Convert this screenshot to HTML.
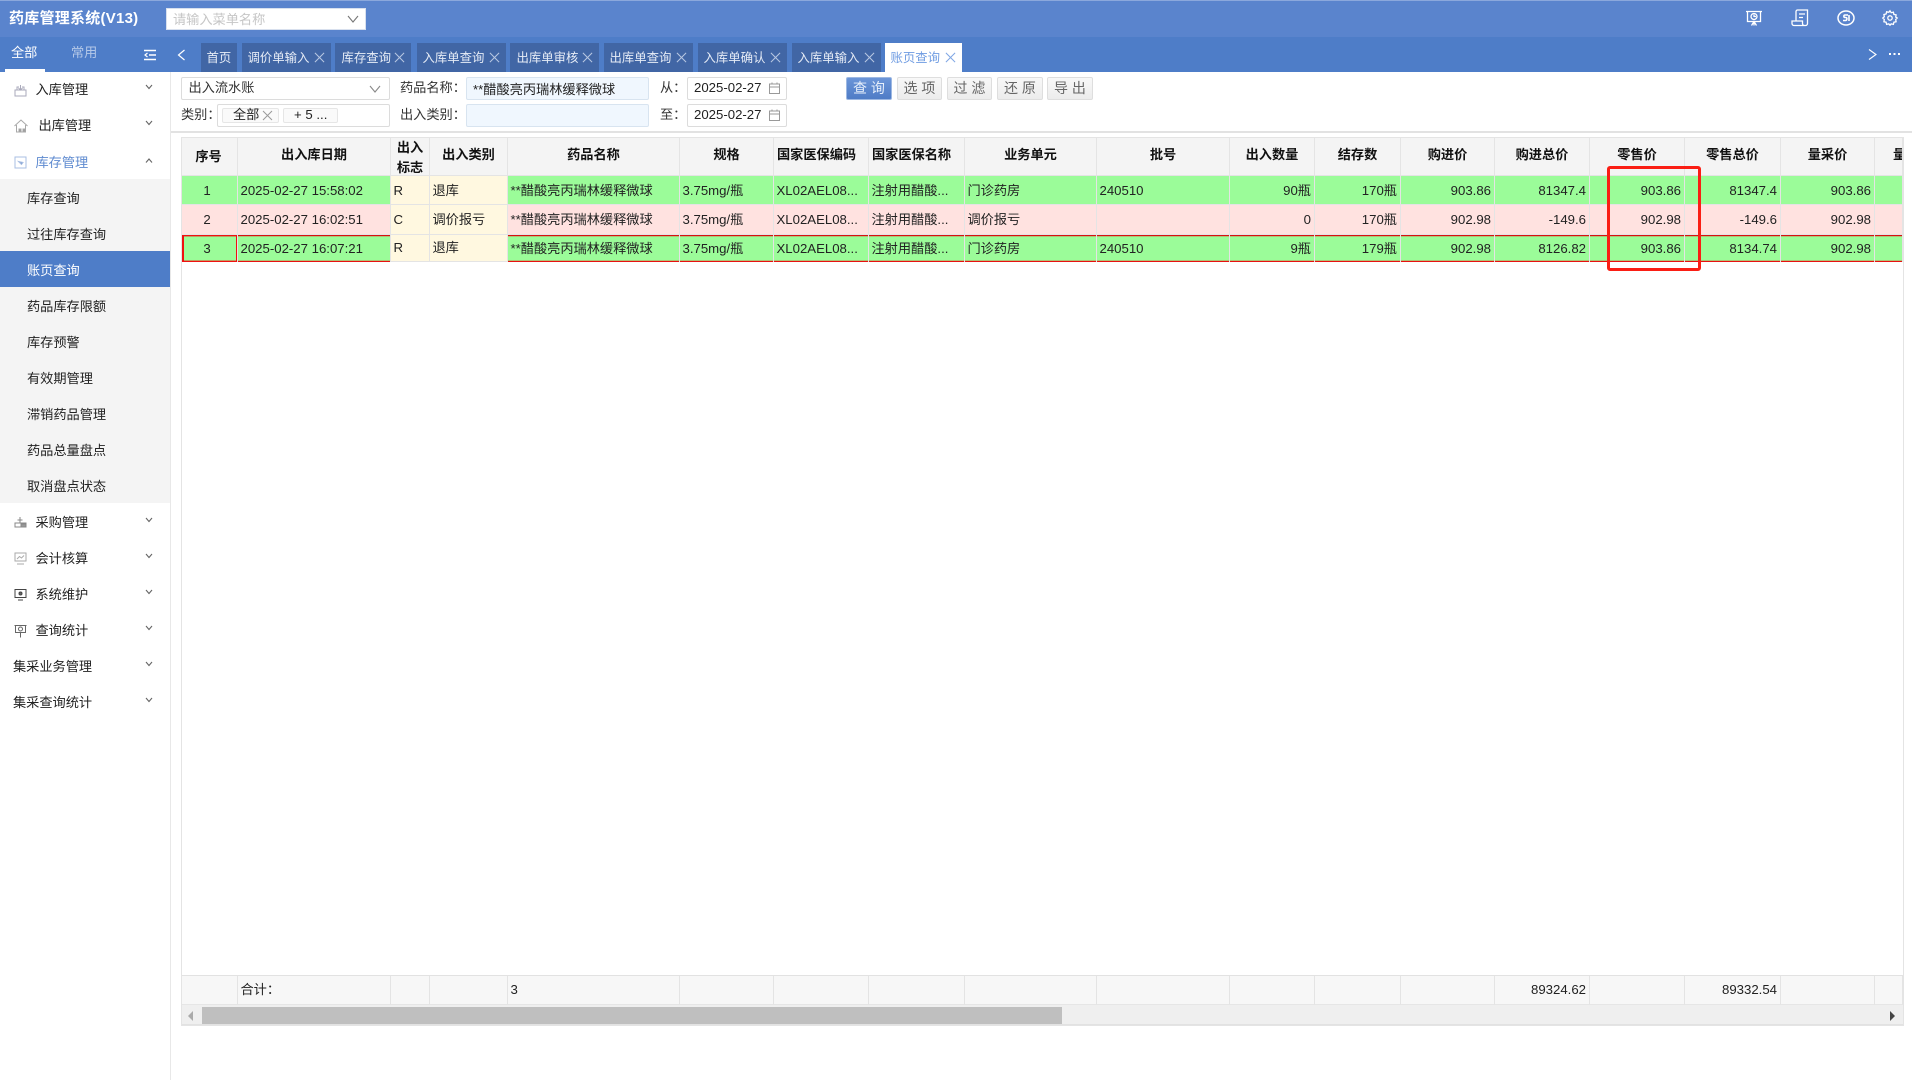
<!DOCTYPE html>
<html lang="zh-CN">
<head>
<meta charset="utf-8">
<title>药库管理系统</title>
<style>
*{box-sizing:border-box}
html,body{margin:0;padding:0;width:1912px;height:1080px;overflow:hidden;background:#fff}
body{font-family:"Liberation Sans","Noto Sans CJK SC",sans-serif;font-size:13.2px;color:#222;position:relative}
.a{position:absolute}
.t{position:absolute;line-height:20px;height:20px;white-space:nowrap}
svg{position:absolute;overflow:visible;fill:none}
.tab{position:absolute;top:43px;height:29px;background:#4166a5;color:#e6ecf6;font-size:12.4px;line-height:30px;padding-left:5.500px;white-space:nowrap}
.tab i{position:absolute;top:9px;right:7px;width:10px;height:10px}
.tab i:before,.tab i:after{content:"";position:absolute;left:4.500px;top:-1px;width:1px;height:13px;background:#b9c8e2}
.tab i:before{transform:rotate(45deg)}.tab i:after{transform:rotate(-45deg)}
.tab.on{background:#fff;color:#6f9ce2}
.tab.on i:before,.tab.on i:after{background:#7fa6e4}
.box{position:absolute;border:1px solid #dcdcdc;border-radius:2px;background:#fff}
.btn{position:absolute;top:77px;height:23px;border:1px solid #dedede;border-radius:2px;background:linear-gradient(#f8f8f8,#ececec);color:#666;text-align:center;line-height:21px;font-size:14px;white-space:nowrap}
.sub{position:absolute;left:27px;line-height:20px;white-space:nowrap}
table{border-collapse:separate;border-spacing:0;table-layout:fixed;position:absolute;left:182px;width:1721px;font-size:13.2px}
td,th{border-right:1px solid #e4e4e4;border-bottom:1px solid #e4e4e4;padding:0 3px 0 2.500px;white-space:nowrap;overflow:hidden;font-weight:normal;color:#222;line-height:20px}
th{background:#f4f4f4;height:38px;font-weight:bold;color:#111;padding:0 0 3px;text-align:center;font-size:13.2px}
th.l{text-align:left;padding-left:3px}
th .two{height:37px;line-height:20px;margin-top:-1px}
.g td{background:#9bfc99}.p td{background:#ffe2e0}
td.y{background:#fff8e0!important}
.r{text-align:right}.c{text-align:center;padding:0 5px 0 0}
.r1 td{height:29px;padding-top:1px}.r2 td{height:30px}
.r3 td{height:27px;box-shadow:inset 0 1px 0 #d81010,inset 0 2px 0 rgba(230,20,20,.25),inset 0 -1px 0 #e81010,inset 0 -2px 0 rgba(230,20,20,.25);border-bottom:0}
.r3 td.y{box-shadow:none;border-bottom:1px solid #e4e4e4}
.r3 td.first{box-shadow:inset 0 1px 0 #f01010,inset 0 -1px 0 #f01010,inset 2px 0 0 #f01010,inset -1px 0 0 #f01010,inset 0 2px 0 rgba(240,16,16,.4),inset 0 -2px 0 rgba(240,16,16,.4)}
.f td{background:#f7f7f7;height:29px;border-top:0;border-bottom:1px solid #e6e6e6;color:#222;line-height:18px}
</style>
</head>
<body>
<!-- top bars -->
<div class="a" style="left:0;top:0;width:1912px;height:37px;background:#5a84cd"></div>
<div class="a" style="left:0;top:0;width:1912px;height:1px;background:#8ba8dc"></div>
<div class="a" style="left:0;top:37px;width:1912px;height:35px;background:#4e7dc8"></div>
<div class="t" style="left:9px;top:9px;color:#fff;font-weight:bold;font-size:15px;letter-spacing:.25px">药库管理系统(V13)</div>
<div class="a" style="left:166px;top:8px;width:200px;height:22px;background:#fff;border:1px solid #d8e0ee"></div>
<div class="t" style="left:173px;top:10px;color:#c6c6c6">请输入菜单名称</div>
<svg style="left:347px;top:15px" width="12" height="8"><path d="M1 1l5 6 5-6" stroke="#777" stroke-width="1.100"/></svg>
<!-- top right icons -->
<svg style="left:1745px;top:9px" width="18" height="18" stroke="#fff" stroke-width="1.300"><path d="M1 2.500h16M2.500 2.500v10h13v-10M9 12.500v4M6.500 16.500l2.500-4 2.500 4"/><circle cx="9" cy="7.500" r="3"/><path d="M9 5.500v2h2"/></svg>
<svg style="left:1791px;top:9px" width="18" height="18" stroke="#fff" stroke-width="1.300"><path d="M5 12V2.500a1.500 1.500 0 0 1 1.500-1.500H16.500v13.500a2 2 0 0 1-2 2H3a2 2 0 0 1-2-2V12h10.500v2.500a2 2 0 0 0 2 2M8 5h6M8 8.500h4"/></svg>
<svg style="left:1837px;top:9px" width="18" height="18" stroke="#fff" stroke-width="1.500"><ellipse cx="9" cy="9" rx="8" ry="7"/><path d="M11 6H8c-1.500 0-1.500 2.500 0 2.500h1c1.500 0 1 3-.5 3H6M12 6v6" stroke-width="1.600"/></svg>
<svg style="left:1882px;top:10px" width="16" height="16" stroke="#fff" stroke-width="1.300"><path d="M8 .8l1.200 1.900 2.200-.5.500 2.200 2.200.5-.4 2.200L15.200 8l-1.500 1.500.4 2.200-2.200.5-.5 2.200-2.200-.5L8 15.200l-1.200-1.300-2.200.5-.5-2.200-2.200-.5.400-2.200L.8 8l1.500-1.300-.4-2.200 2.200-.5.500-2.200 2.200.5z"/><circle cx="8" cy="8" r="2.200"/></svg>
<svg style="left:1868px;top:49px" width="9" height="11"><path d="M1 .5l7 5-7 5" stroke="#fff" stroke-width="1.100"/></svg>
<div class="a" style="left:1889px;top:53px;width:2px;height:2px;background:#fff;box-shadow:4.500px 0 0 #fff,9px 0 0 #fff"></div>
<!-- side tabs -->
<div class="t" style="left:11px;top:43px;color:#fff">全部</div>
<div class="t" style="left:71px;top:43px;color:#b4c8e8">常用</div>
<div class="a" style="left:5px;top:69px;width:40px;height:3px;background:#fff"></div>
<svg style="left:144px;top:49px" width="12" height="12" stroke="#fff" stroke-width="1.600"><path d="M0 1.500h12M5 6h7M0 10.500h12"/><path d="M3.500 4L1 6l2.500 2" stroke-width="1.200"/></svg>
<svg style="left:177px;top:49px" width="9" height="12"><path d="M7.500 1L1.500 6l6 5" stroke="#fff" stroke-width="1.200"/></svg>
<!-- tabs -->
<div class="tab" style="left:201px;width:36px">首页</div>
<div class="tab" style="left:242px;width:89px">调价单输入<i></i></div>
<div class="tab" style="left:335px;width:76px;padding-left:6.500px">库存查询<i></i></div>
<div class="tab" style="left:417px;width:89px">入库单查询<i></i></div>
<div class="tab" style="left:510px;width:89px;padding-left:6.500px">出库单审核<i></i></div>
<div class="tab" style="left:604px;width:89px">出库单查询<i></i></div>
<div class="tab" style="left:698px;width:89px">入库单确认<i></i></div>
<div class="tab" style="left:792px;width:89px">入库单输入<i></i></div>
<div class="tab on" style="left:885px;width:77px">账页查询<i></i></div>
<!-- sidebar -->
<div class="a" style="left:170px;top:72px;width:1px;height:1008px;background:#e8e8e8"></div>
<div class="a" style="left:0;top:179px;width:170px;height:324px;background:#f4f4f4"></div>
<div class="a" style="left:0;top:251px;width:170px;height:36px;background:#4e7dc8"></div>
<!-- first level icons -->
<svg style="left:14px;top:84px" width="13" height="13" stroke="#aab" stroke-width="1"><path d="M1 6h11v6H1zM3 6V3h2M10 6V3H8M6.500 1v5M4.500 4l2 2 2-2"/></svg>
<svg style="left:14px;top:119px" width="14" height="14" stroke="#a8a8a8" stroke-width="1"><path d="M.5 7L7 1l6.500 6M2.500 6v7h9V6"/><path d="M5 10h2v3H5zM9 10h2v3H9z" fill="#999"/></svg>
<svg style="left:14px;top:156px" width="13" height="13" stroke="#a9bfe3" stroke-width="1"><path d="M1 1h11v11H1z"/><path d="M4.500 5.500l3 3 1.500-2z" fill="#6f8fc6"/></svg>
<svg style="left:14px;top:516px" width="13" height="13" stroke="#888" stroke-width="1"><path d="M1 7h11v4H1zM6 1v6M3.500 4h5"/><path d="M7 8h5v3H7z" fill="#999"/></svg>
<svg style="left:14px;top:552px" width="13" height="13" stroke="#aaa" stroke-width="1"><path d="M1 1h11v8H1zM3 12h7M3 7l2.500-2.500 2 1.500L10 3.500"/></svg>
<svg style="left:14px;top:588px" width="13" height="13" stroke="#444" stroke-width="1"><path d="M1 1.500h11v8H1zM4 12h5"/><circle cx="6.500" cy="5.500" r="1.500" fill="#666"/></svg>
<svg style="left:14px;top:624px" width="13" height="14" stroke="#666" stroke-width="1"><path d="M.5 1.500h12M1.500 1.500v7h10v-7M6.500 8.500v5"/><circle cx="6.500" cy="5" r="2"/></svg>
<div class="t" style="left:35.500px;top:80px">入库管理</div>
<div class="t" style="left:38.500px;top:116px">出库管理</div>
<div class="t" style="left:35.500px;top:153px;color:#5f8bd0">库存管理</div>
<div class="sub" style="top:189px">库存查询</div>
<div class="sub" style="top:225px">过往库存查询</div>
<div class="sub" style="top:261px;color:#fff">账页查询</div>
<div class="sub" style="top:297px">药品库存限额</div>
<div class="sub" style="top:333px">库存预警</div>
<div class="sub" style="top:369px">有效期管理</div>
<div class="sub" style="top:405px">滞销药品管理</div>
<div class="sub" style="top:441px">药品总量盘点</div>
<div class="sub" style="top:477px">取消盘点状态</div>
<div class="t" style="left:35.500px;top:513px">采购管理</div>
<div class="t" style="left:35.500px;top:549px">会计核算</div>
<div class="t" style="left:35.500px;top:585px">系统维护</div>
<div class="t" style="left:35.500px;top:621px">查询统计</div>
<div class="t" style="left:13px;top:657px">集采业务管理</div>
<div class="t" style="left:13px;top:693px">集采查询统计</div>
<svg style="left:0;top:0" width="170" height="720" stroke="#666" stroke-width="1.100"><path d="M146 85l3 3.500 3-3.500M146 121l3 3.500 3-3.500M146 162.500l3-3.500 3 3.500M146 518l3 3.500 3-3.500M146 554l3 3.500 3-3.500M146 590l3 3.500 3-3.500M146 626l3 3.500 3-3.500M146 662l3 3.500 3-3.500M146 698l3 3.500 3-3.500"/></svg>
<!-- filter -->
<div class="box" style="left:181px;top:77px;width:209px;height:23px"></div>
<div class="t" style="left:188.500px;top:78px;color:#333">出入流水账</div>
<svg style="left:369px;top:85px" width="12" height="8"><path d="M1 1l5 6 5-6" stroke="#888" stroke-width="1.100"/></svg>
<div class="t" style="left:400px;top:78px;color:#333">药品名称：</div>
<div class="box" style="left:466px;top:77px;width:183px;height:23px;background:#f0f7fe;border-color:#d8e4f0"></div>
<div class="t" style="left:473px;top:80px;color:#222">**醋酸亮丙瑞林缓释微球</div>
<div class="t" style="left:181px;top:105px;color:#333">类别：</div>
<div class="box" style="left:217px;top:104px;width:173px;height:23px"></div>
<div class="box" style="left:222px;top:108px;width:57px;height:15px;background:#fafafa;border-color:#e6e6e6"></div>
<div class="t" style="left:233px;top:105px;color:#222">全部</div>
<svg style="left:263px;top:111px" width="9" height="9" stroke="#999"><path d="M0 0l9 9M9 0L0 9"/></svg>
<div class="box" style="left:283px;top:108px;width:55px;height:15px;background:#fafafa;border-color:#e6e6e6"></div>
<div class="t" style="left:294px;top:105px;color:#222">+ 5 ...</div>
<div class="t" style="left:400px;top:105px;color:#333">出入类别：</div>
<div class="box" style="left:466px;top:104px;width:183px;height:23px;background:#f0f7fe;border-color:#d8e4f0"></div>
<div class="t" style="left:660px;top:78px;color:#333">从：</div>
<div class="t" style="left:660px;top:105px;color:#333">至：</div>
<div class="box" style="left:687px;top:77px;width:100px;height:23px"></div>
<div class="box" style="left:687px;top:104px;width:100px;height:23px"></div>
<div class="t" style="left:694px;top:78px">2025-02-27</div>
<div class="t" style="left:694px;top:105px">2025-02-27</div>
<svg style="left:769px;top:82px" width="11" height="12" stroke="#999"><path d="M.5 2h10v9.500H.5zM.5 5h10M3 .5v2M8 .5v2"/></svg>
<svg style="left:769px;top:109px" width="11" height="12" stroke="#999"><path d="M.5 2h10v9.500H.5zM.5 5h10M3 .5v2M8 .5v2"/></svg>
<div class="btn" style="left:846px;width:46px;background:linear-gradient(#6b95d8,#4f7cc6);border-color:#9db8e2;color:#e8f0fb">查 询</div>
<div class="btn" style="left:897px;width:45px">选 项</div>
<div class="btn" style="left:947px;width:45px">过 滤</div>
<div class="btn" style="left:997px;width:46px">还 原</div>
<div class="btn" style="left:1047px;width:46px">导 出</div>
<div class="a" style="left:171px;top:131px;width:1741px;height:2px;background:#e2e2e2"></div>
<!-- table frame -->
<div class="a" style="left:181px;top:137px;width:1723px;height:889px;border:1px solid #e4e4e4;background:#fff"></div>
<table style="top:138px">
<colgroup><col style="width:56px"><col style="width:153px"><col style="width:39px"><col style="width:78px"><col style="width:172px"><col style="width:94px"><col style="width:95px"><col style="width:96px"><col style="width:132px"><col style="width:133px"><col style="width:85px"><col style="width:86px"><col style="width:94px"><col style="width:95px"><col style="width:95px"><col style="width:96px"><col style="width:94px"><col style="width:28px"></colgroup>
<tr><th style="padding:1px 2px 0 0">序号</th><th>出入库日期</th><th style="padding:0"><div class="two">出入<br>标志</div></th><th>出入类别</th><th>药品名称</th><th>规格</th><th class="l">国家医保编码</th><th class="l">国家医保名称</th><th>业务单元</th><th>批号</th><th>出入数量</th><th>结存数</th><th>购进价</th><th>购进总价</th><th>零售价</th><th>零售总价</th><th>量采价</th><th style="text-align:left;padding-left:18px">量采</th></tr>
<tr class="g r1"><td class="c">1</td><td>2025-02-27 15:58:02</td><td class="y">R</td><td class="y">退库</td><td>**醋酸亮丙瑞林缓释微球</td><td>3.75mg/瓶</td><td>XL02AEL08...</td><td>注射用醋酸...</td><td>门诊药房</td><td>240510</td><td class="r">90瓶</td><td class="r">170瓶</td><td class="r">903.86</td><td class="r">81347.4</td><td class="r">903.86</td><td class="r">81347.4</td><td class="r">903.86</td><td></td></tr>
<tr class="p r2"><td class="c">2</td><td>2025-02-27 16:02:51</td><td class="y">C</td><td class="y">调价报亏</td><td>**醋酸亮丙瑞林缓释微球</td><td>3.75mg/瓶</td><td>XL02AEL08...</td><td>注射用醋酸...</td><td>调价报亏</td><td></td><td class="r">0</td><td class="r">170瓶</td><td class="r">902.98</td><td class="r">-149.6</td><td class="r">902.98</td><td class="r">-149.6</td><td class="r">902.98</td><td></td></tr>
<tr class="g r3"><td class="c first">3</td><td>2025-02-27 16:07:21</td><td class="y">R</td><td class="y">退库</td><td>**醋酸亮丙瑞林缓释微球</td><td>3.75mg/瓶</td><td>XL02AEL08...</td><td>注射用醋酸...</td><td>门诊药房</td><td>240510</td><td class="r">9瓶</td><td class="r">179瓶</td><td class="r">902.98</td><td class="r">8126.82</td><td class="r">903.86</td><td class="r">8134.74</td><td class="r">902.98</td><td></td></tr>
</table>
<!-- footer -->
<div class="a" style="left:182px;top:975px;width:1721px;height:1px;background:#e2e2e2"></div>
<table style="top:976px">
<colgroup><col style="width:56px"><col style="width:153px"><col style="width:39px"><col style="width:78px"><col style="width:172px"><col style="width:94px"><col style="width:95px"><col style="width:96px"><col style="width:132px"><col style="width:133px"><col style="width:85px"><col style="width:86px"><col style="width:94px"><col style="width:95px"><col style="width:95px"><col style="width:96px"><col style="width:94px"><col style="width:28px"></colgroup>
<tr class="f"><td></td><td>合计：</td><td></td><td></td><td>3</td><td></td><td></td><td></td><td></td><td></td><td></td><td></td><td></td><td class="r">89324.62</td><td></td><td class="r">89332.54</td><td></td><td></td></tr>
</table>
<div class="a" style="left:182px;top:1005px;width:1721px;height:20px;background:#efefef;border-bottom:1px solid #e2e2e2"></div>
<div class="a" style="left:202px;top:1007px;width:860px;height:17px;background:#bfbfbf"></div>
<svg style="left:188px;top:1011px" width="6" height="10"><path d="M5 0v10L0 5z" fill="#aaa"/></svg>
<svg style="left:1890px;top:1011px" width="6" height="10"><path d="M0 0v10l5-5z" fill="#444"/></svg>
<!-- red highlight -->
<div class="a" style="left:1607px;top:166px;width:94px;height:105px;border:3px solid #fa1e14;border-radius:3px"></div>
</body>
</html>
